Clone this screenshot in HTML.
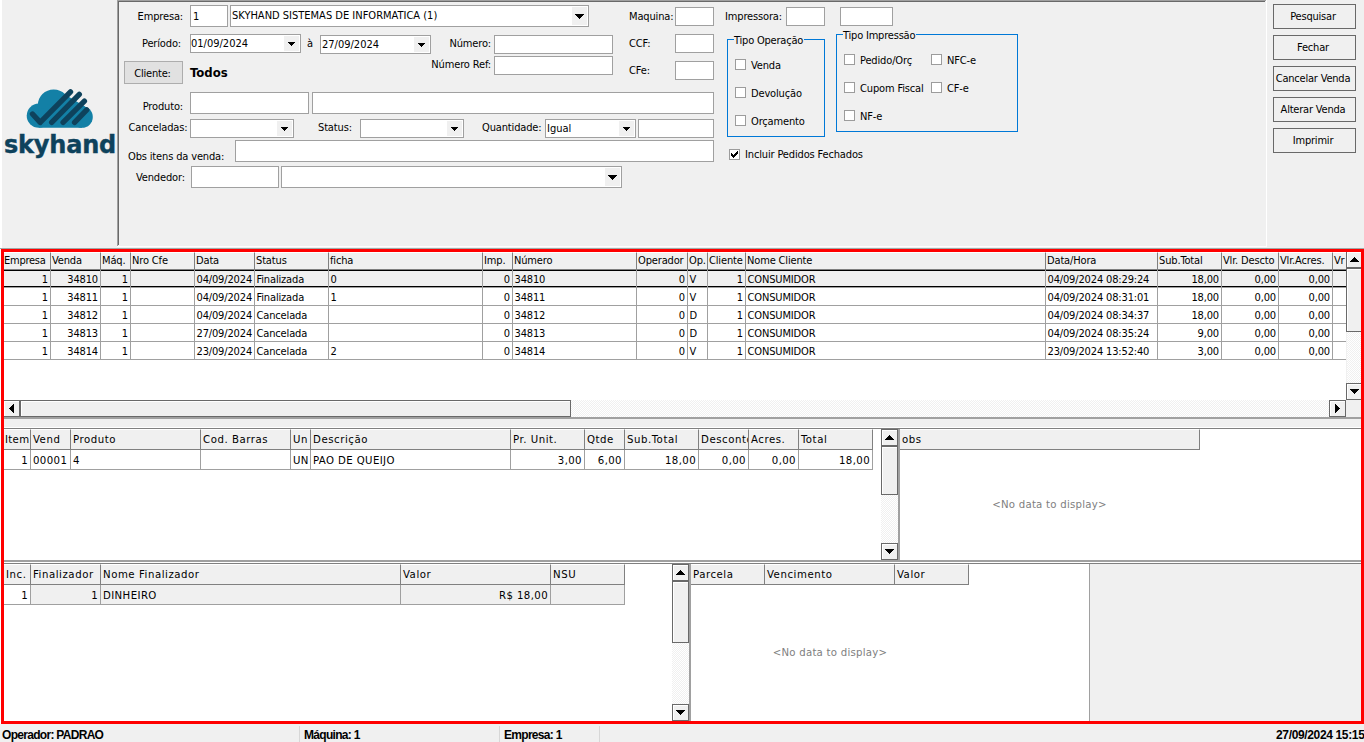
<!DOCTYPE html>
<html lang="pt-BR"><head><meta charset="utf-8"><title>Consulta de Vendas</title>
<style>
html,body{margin:0;padding:0}
body{width:1364px;height:742px;overflow:hidden;background:#f0f0f0;position:relative;
 font-family:"DejaVu Sans Condensed","Liberation Sans",sans-serif;font-size:11px;color:#000;line-height:13px;}
div,span,svg{position:absolute;box-sizing:border-box;white-space:nowrap}
.in{background:#fff;border:1px solid #a0a0a0}
.in span{left:2px}
.lb{height:13px;line-height:13px;letter-spacing:-.15px}
.r{text-align:right}
.btn{border:1px solid #696969;background:#f0f0f0;text-align:center;line-height:24px;letter-spacing:-.2px;padding-right:3px}
.dd{background:#f0f0f0}
.cb{width:11px;height:11px;background:#fff;border:1px solid #9c9c9c}
.grp{border:1px solid #0078d7}
.grp b{position:absolute;font-weight:normal;background:#f0f0f0;top:-6px;height:13px;line-height:13px;letter-spacing:-.2px}
.g{background:#fff;overflow:hidden}
.hd{background:#f0f0f0;border-right:1px solid #808080;border-bottom:1px solid #808080;border-top:1px solid #fff;padding-left:1px;overflow:hidden}
.c{border-right:1px solid #a0a0a0;border-bottom:1px solid #a0a0a0;padding:0 2px 0 2px;overflow:hidden}
.g1 .hd{height:18px;line-height:16px;letter-spacing:-.15px}
.g1 .c{height:18px;line-height:17px;padding:1px 2px 0 1.5px;letter-spacing:-.15px}
.s12{font-size:11.3px}
.s12 .hd{height:21px;line-height:20px;padding-left:2px;letter-spacing:.55px}
.s12 .c{height:20px;line-height:19px;padding-top:1px;letter-spacing:.4px}
.sb{background:#f0f0f0}
.trk{background-color:#fff;background-image:
 linear-gradient(45deg,#f0f0f0 25%,transparent 25%,transparent 75%,#f0f0f0 75%),
 linear-gradient(45deg,#f0f0f0 25%,transparent 25%,transparent 75%,#f0f0f0 75%);
 background-size:2px 2px;background-position:0 0,1px 1px}
.sbb{background:#f0f0f0;border:1px solid #696969;box-shadow:inset 1px 1px 0 #fff}
.nd{color:#808080;font-size:11.3px;letter-spacing:.25px}
.st{font-family:"Liberation Sans",sans-serif;font-weight:bold;font-size:12px;letter-spacing:-.7px;top:728px;height:14px;line-height:14px}
</style></head>
<body>
<div class="" style="left:0px;top:0px;width:2px;height:249px;background:#fff"></div>
<div class="" style="left:0px;top:249px;width:1px;height:475px;background:#fff"></div>
<div class="" style="left:117px;top:0px;width:1149px;height:1px;background:#a0a0a0"></div>
<div class="" style="left:118px;top:1px;width:1147px;height:1px;background:#696969"></div>
<div class="" style="left:117px;top:0px;width:1px;height:246px;background:#a0a0a0"></div>
<div class="" style="left:118px;top:1px;width:1px;height:244px;background:#696969"></div>
<div class="" style="left:117px;top:246px;width:1150px;height:1px;background:#fff"></div>
<div class="" style="left:1266px;top:0px;width:1px;height:247px;background:#fff"></div>
<div class="" style="left:0px;top:248px;width:1364px;height:1px;background:#a0a8a8"></div>
<svg style="left:22px;top:86px" width="76" height="46" viewBox="0 0 76 46">
<g fill="#1380a6"><circle cx="16.8" cy="29.7" r="12.1"/><circle cx="31.7" cy="19.3" r="15.9"/><circle cx="60" cy="31" r="10.8"/>
<path d="M16.8 41.8 L16.8 25 L42 8 L63 20.5 L60 41.8 Z"/></g>
<g stroke="#0e425c" stroke-width="5.4" stroke-linecap="round" stroke-linejoin="round" fill="none">
<path d="M10.5 28 L18.2 36.4 L48.5 5.8"/>
<path d="M29.7 36.4 L57.3 8.4"/>
<path d="M41.1 36.4 L62.4 15.2"/>
<path d="M52.6 36.4 L64.7 23.9"/>
</g></svg>
<span style="left:4px;top:128.5px;width:112px;height:32px;line-height:32px;text-align:center;font-family:'DejaVu Sans','Liberation Sans',sans-serif;font-weight:bold;font-size:24px;color:#0e425c;letter-spacing:-.2px;-webkit-text-stroke:.4px #0e425c" id="logo">skyhand</span>
<span class="lb r" style="right:1181px;top:10px;">Empresa:</span>
<div class="in" style="left:190px;top:5px;width:38px;height:22px;"><span style="top:4px">1</span></div>
<div class="in" style="left:230px;top:5px;width:359px;height:22px;"><span style="top:3px;left:1px">SKYHAND SISTEMAS DE INFORMATICA (1)</span><div class="dd" style="left:341px;top:1px;width:15px;height:18px"><svg width="9" height="5" viewBox="0 0 9 5" shape-rendering="crispEdges" style="left:3px;top:7px"><path d="M0 0h9v1h-1v1h-1v1h-1v1h-1v1h-1v-1h-1v-1h-1v-1h-1v-1h-1z"/></svg></div></div>
<span class="lb r" style="right:1183px;top:37px;">Período:</span>
<div class="in" style="left:190px;top:34px;width:111px;height:19px;"><span style="top:2px;left:0px">01/09/2024</span><div class="dd" style="left:93px;top:1px;width:15px;height:15px"><svg width="7" height="4" viewBox="0 0 7 4" shape-rendering="crispEdges" style="left:4px;top:6px"><path d="M0 0h7v1h-1v1h-1v1h-1v1h-1v-1h-1v-1h-1v-1h-1z"/></svg></div></div>
<span class="lb" style="left:307px;top:37px;">à</span>
<div class="in" style="left:320px;top:35px;width:111px;height:19px;"><span style="top:2px;left:1px">27/09/2024</span><div class="dd" style="left:93px;top:1px;width:15px;height:15px"><svg width="7" height="4" viewBox="0 0 7 4" shape-rendering="crispEdges" style="left:4px;top:6px"><path d="M0 0h7v1h-1v1h-1v1h-1v1h-1v-1h-1v-1h-1v-1h-1z"/></svg></div></div>
<span class="lb r" style="right:873px;top:37px;">Número:</span>
<div class="in" style="left:494px;top:35px;width:119px;height:19px;"></div>
<span class="lb r" style="right:873px;top:58px;">Número Ref:</span>
<div class="in" style="left:494px;top:56px;width:119px;height:19px;"></div>
<div class="btn" style="left:124px;top:61px;width:59px;height:23px;line-height:23px;background:#e1e1e1;border-color:#adadad;padding-right:2px">Cliente:</div>
<span style="left:190px;top:65px;font-weight:bold;font-size:13px;line-height:16px" id="todos">Todos</span>
<span class="lb" style="left:629px;top:10px;">Maquina:</span>
<div class="in" style="left:675px;top:7px;width:39px;height:19px;"></div>
<span class="lb" style="left:629px;top:37px;">CCF:</span>
<div class="in" style="left:675px;top:34px;width:39px;height:19px;"></div>
<span class="lb" style="left:629px;top:64px;">CFe:</span>
<div class="in" style="left:675px;top:61px;width:39px;height:19px;"></div>
<span class="lb" style="left:725px;top:10px;">Impressora:</span>
<div class="in" style="left:786px;top:7px;width:39px;height:19px;"></div>
<div class="in" style="left:840px;top:7px;width:53px;height:19px;"></div>
<span class="lb r" style="right:1181px;top:100px;">Produto:</span>
<div class="in" style="left:190px;top:92px;width:119px;height:22px;"></div>
<div class="in" style="left:312px;top:92px;width:402px;height:22px;"></div>
<span class="lb" style="left:128.6px;top:121px;">Canceladas:</span>
<div class="in" style="left:190px;top:119px;width:104px;height:19px;"><div class="dd" style="left:86px;top:1px;width:15px;height:15px"><svg width="7" height="4" viewBox="0 0 7 4" shape-rendering="crispEdges" style="left:4px;top:6px"><path d="M0 0h7v1h-1v1h-1v1h-1v1h-1v-1h-1v-1h-1v-1h-1z"/></svg></div></div>
<span class="lb" style="left:318px;top:121px;">Status:</span>
<div class="in" style="left:360px;top:119px;width:104px;height:19px;"><div class="dd" style="left:86px;top:1px;width:15px;height:15px"><svg width="7" height="4" viewBox="0 0 7 4" shape-rendering="crispEdges" style="left:4px;top:6px"><path d="M0 0h7v1h-1v1h-1v1h-1v1h-1v-1h-1v-1h-1v-1h-1z"/></svg></div></div>
<span class="lb" style="left:482px;top:121px;">Quantidade:</span>
<div class="in" style="left:545px;top:119px;width:91px;height:19px;"><span style="top:2px;left:1px">Igual</span><div class="dd" style="left:73px;top:1px;width:15px;height:15px"><svg width="7" height="4" viewBox="0 0 7 4" shape-rendering="crispEdges" style="left:4px;top:6px"><path d="M0 0h7v1h-1v1h-1v1h-1v1h-1v-1h-1v-1h-1v-1h-1z"/></svg></div></div>
<div class="in" style="left:638px;top:119px;width:76px;height:19px;"></div>
<span class="lb" style="left:128px;top:150px;">Obs itens da venda:</span>
<div class="in" style="left:235px;top:140px;width:479px;height:22px;"></div>
<span class="lb" style="left:136px;top:171px;">Vendedor:</span>
<div class="in" style="left:191px;top:166px;width:88px;height:22px;"></div>
<div class="in" style="left:281px;top:166px;width:341px;height:22px;"><div class="dd" style="left:323px;top:1px;width:15px;height:18px"><svg width="9" height="5" viewBox="0 0 9 5" shape-rendering="crispEdges" style="left:3px;top:7px"><path d="M0 0h9v1h-1v1h-1v1h-1v1h-1v1h-1v-1h-1v-1h-1v-1h-1v-1h-1z"/></svg></div></div>
<div class="grp" style="left:727px;top:39px;width:98px;height:98px;"><b style="left:6px;padding:0 1px 0 0">Tipo Operação</b></div>
<div class="cb" style="left:735px;top:59px;"></div>
<span class="lb" style="left:751px;top:59px">Venda</span>
<div class="cb" style="left:735px;top:87px;"></div>
<span class="lb" style="left:751px;top:87px">Devolução</span>
<div class="cb" style="left:735px;top:115px;"></div>
<span class="lb" style="left:751px;top:115px">Orçamento</span>
<div class="grp" style="left:836px;top:34px;width:182px;height:98px;"><b style="left:6px;padding:0 1px 0 0">Tipo Impressão</b></div>
<div class="cb" style="left:844px;top:54px;"></div>
<span class="lb" style="left:860px;top:54px">Pedido/Orç</span>
<div class="cb" style="left:844px;top:82px;"></div>
<span class="lb" style="left:860px;top:82px">Cupom Fiscal</span>
<div class="cb" style="left:844px;top:110px;"></div>
<span class="lb" style="left:860px;top:110px">NF-e</span>
<div class="cb" style="left:931px;top:54px;"></div>
<span class="lb" style="left:947px;top:54px">NFC-e</span>
<div class="cb" style="left:931px;top:82px;"></div>
<span class="lb" style="left:947px;top:82px">CF-e</span>
<div class="cb" style="left:729px;top:149px;"><svg width="7" height="7" viewBox="0 0 7 7" style="left:1px;top:1px" shape-rendering="crispEdges"><path d="M0 2h1v1h1v1h1v-1h1v-1h1v-1h1v-1h1v3h-1v1h-1v1h-1v1h-1v1h-1v-1h-1v-1h-1z" fill="#000"/></svg></div>
<span class="lb" style="left:745px;top:148px">Incluir Pedidos Fechados</span>
<div class="btn" style="left:1273px;top:4px;width:83px;height:25px;">Pesquisar</div>
<div class="btn" style="left:1273px;top:35px;width:83px;height:25px;">Fechar</div>
<div class="btn" style="left:1273px;top:66px;width:83px;height:25px;letter-spacing:-.2px">Cancelar Venda</div>
<div class="btn" style="left:1273px;top:97px;width:83px;height:25px;">Alterar Venda</div>
<div class="btn" style="left:1273px;top:128px;width:83px;height:25px;">Imprimir</div>
<div class="g g1" style="left:4px;top:252px;width:1342px;height:148px">
<div class="hd" style="left:0px;top:0;width:47px;padding-left:0;letter-spacing:-.25px;">Empresa</div>
<div class="hd" style="left:47px;top:0;width:50px;">Venda</div>
<div class="hd" style="left:97px;top:0;width:30px;">Máq.</div>
<div class="hd" style="left:127px;top:0;width:64px;">Nro Cfe</div>
<div class="hd" style="left:191px;top:0;width:60px;">Data</div>
<div class="hd" style="left:251px;top:0;width:74px;">Status</div>
<div class="hd" style="left:325px;top:0;width:154px;">ficha</div>
<div class="hd" style="left:479px;top:0;width:30px;">Imp.</div>
<div class="hd" style="left:509px;top:0;width:124px;">Número</div>
<div class="hd" style="left:633px;top:0;width:51px;">Operador</div>
<div class="hd" style="left:684px;top:0;width:20px;">Op.</div>
<div class="hd" style="left:704px;top:0;width:38px;">Cliente</div>
<div class="hd" style="left:742px;top:0;width:300px;">Nome Cliente</div>
<div class="hd" style="left:1042px;top:0;width:112px;">Data/Hora</div>
<div class="hd" style="left:1154px;top:0;width:64px;">Sub.Total</div>
<div class="hd" style="left:1218px;top:0;width:57px;">Vlr. Descto</div>
<div class="hd" style="left:1275px;top:0;width:54px;">Vlr.Acres.</div>
<div class="hd" style="left:1329px;top:0;width:18px;">Vr</div>
<div class="c r" style="left:0px;top:18px;width:47px;background:#f0f0f0;">1</div>
<div class="c r" style="left:47px;top:18px;width:50px;background:#f0f0f0;">34810</div>
<div class="c r" style="left:97px;top:18px;width:30px;background:#f0f0f0;">1</div>
<div class="c " style="left:127px;top:18px;width:64px;background:#f0f0f0;"></div>
<div class="c " style="left:191px;top:18px;width:60px;background:#f0f0f0;">04/09/2024</div>
<div class="c " style="left:251px;top:18px;width:74px;background:#f0f0f0;">Finalizada</div>
<div class="c " style="left:325px;top:18px;width:154px;background:#f0f0f0;">0</div>
<div class="c r" style="left:479px;top:18px;width:30px;background:#f0f0f0;">0</div>
<div class="c " style="left:509px;top:18px;width:124px;background:#f0f0f0;">34810</div>
<div class="c r" style="left:633px;top:18px;width:51px;background:#f0f0f0;">0</div>
<div class="c " style="left:684px;top:18px;width:20px;background:#f0f0f0;">V</div>
<div class="c r" style="left:704px;top:18px;width:38px;background:#f0f0f0;">1</div>
<div class="c " style="left:742px;top:18px;width:300px;background:#f0f0f0;">CONSUMIDOR</div>
<div class="c " style="left:1042px;top:18px;width:112px;background:#f0f0f0;">04/09/2024 08:29:24</div>
<div class="c r" style="left:1154px;top:18px;width:64px;background:#f0f0f0;">18,00</div>
<div class="c r" style="left:1218px;top:18px;width:57px;background:#f0f0f0;">0,00</div>
<div class="c r" style="left:1275px;top:18px;width:54px;background:#f0f0f0;">0,00</div>
<div class="c " style="left:1329px;top:18px;width:18px;background:#f0f0f0;"></div>
<div class="c r" style="left:0px;top:36px;width:47px;">1</div>
<div class="c r" style="left:47px;top:36px;width:50px;">34811</div>
<div class="c r" style="left:97px;top:36px;width:30px;">1</div>
<div class="c " style="left:127px;top:36px;width:64px;"></div>
<div class="c " style="left:191px;top:36px;width:60px;">04/09/2024</div>
<div class="c " style="left:251px;top:36px;width:74px;">Finalizada</div>
<div class="c " style="left:325px;top:36px;width:154px;">1</div>
<div class="c r" style="left:479px;top:36px;width:30px;">0</div>
<div class="c " style="left:509px;top:36px;width:124px;">34811</div>
<div class="c r" style="left:633px;top:36px;width:51px;">0</div>
<div class="c " style="left:684px;top:36px;width:20px;">V</div>
<div class="c r" style="left:704px;top:36px;width:38px;">1</div>
<div class="c " style="left:742px;top:36px;width:300px;">CONSUMIDOR</div>
<div class="c " style="left:1042px;top:36px;width:112px;">04/09/2024 08:31:01</div>
<div class="c r" style="left:1154px;top:36px;width:64px;">18,00</div>
<div class="c r" style="left:1218px;top:36px;width:57px;">0,00</div>
<div class="c r" style="left:1275px;top:36px;width:54px;">0,00</div>
<div class="c " style="left:1329px;top:36px;width:18px;"></div>
<div class="c r" style="left:0px;top:54px;width:47px;">1</div>
<div class="c r" style="left:47px;top:54px;width:50px;">34812</div>
<div class="c r" style="left:97px;top:54px;width:30px;">1</div>
<div class="c " style="left:127px;top:54px;width:64px;"></div>
<div class="c " style="left:191px;top:54px;width:60px;">04/09/2024</div>
<div class="c " style="left:251px;top:54px;width:74px;">Cancelada</div>
<div class="c " style="left:325px;top:54px;width:154px;"></div>
<div class="c r" style="left:479px;top:54px;width:30px;">0</div>
<div class="c " style="left:509px;top:54px;width:124px;">34812</div>
<div class="c r" style="left:633px;top:54px;width:51px;">0</div>
<div class="c " style="left:684px;top:54px;width:20px;">D</div>
<div class="c r" style="left:704px;top:54px;width:38px;">1</div>
<div class="c " style="left:742px;top:54px;width:300px;">CONSUMIDOR</div>
<div class="c " style="left:1042px;top:54px;width:112px;">04/09/2024 08:34:37</div>
<div class="c r" style="left:1154px;top:54px;width:64px;">18,00</div>
<div class="c r" style="left:1218px;top:54px;width:57px;">0,00</div>
<div class="c r" style="left:1275px;top:54px;width:54px;">0,00</div>
<div class="c " style="left:1329px;top:54px;width:18px;"></div>
<div class="c r" style="left:0px;top:72px;width:47px;">1</div>
<div class="c r" style="left:47px;top:72px;width:50px;">34813</div>
<div class="c r" style="left:97px;top:72px;width:30px;">1</div>
<div class="c " style="left:127px;top:72px;width:64px;"></div>
<div class="c " style="left:191px;top:72px;width:60px;">27/09/2024</div>
<div class="c " style="left:251px;top:72px;width:74px;">Cancelada</div>
<div class="c " style="left:325px;top:72px;width:154px;"></div>
<div class="c r" style="left:479px;top:72px;width:30px;">0</div>
<div class="c " style="left:509px;top:72px;width:124px;">34813</div>
<div class="c r" style="left:633px;top:72px;width:51px;">0</div>
<div class="c " style="left:684px;top:72px;width:20px;">D</div>
<div class="c r" style="left:704px;top:72px;width:38px;">1</div>
<div class="c " style="left:742px;top:72px;width:300px;">CONSUMIDOR</div>
<div class="c " style="left:1042px;top:72px;width:112px;">04/09/2024 08:35:24</div>
<div class="c r" style="left:1154px;top:72px;width:64px;">9,00</div>
<div class="c r" style="left:1218px;top:72px;width:57px;">0,00</div>
<div class="c r" style="left:1275px;top:72px;width:54px;">0,00</div>
<div class="c " style="left:1329px;top:72px;width:18px;"></div>
<div class="c r" style="left:0px;top:90px;width:47px;">1</div>
<div class="c r" style="left:47px;top:90px;width:50px;">34814</div>
<div class="c r" style="left:97px;top:90px;width:30px;">1</div>
<div class="c " style="left:127px;top:90px;width:64px;"></div>
<div class="c " style="left:191px;top:90px;width:60px;">23/09/2024</div>
<div class="c " style="left:251px;top:90px;width:74px;">Cancelada</div>
<div class="c " style="left:325px;top:90px;width:154px;">2</div>
<div class="c r" style="left:479px;top:90px;width:30px;">0</div>
<div class="c " style="left:509px;top:90px;width:124px;">34814</div>
<div class="c r" style="left:633px;top:90px;width:51px;">0</div>
<div class="c " style="left:684px;top:90px;width:20px;">V</div>
<div class="c r" style="left:704px;top:90px;width:38px;">1</div>
<div class="c " style="left:742px;top:90px;width:300px;">CONSUMIDOR</div>
<div class="c " style="left:1042px;top:90px;width:112px;">23/09/2024 13:52:40</div>
<div class="c r" style="left:1154px;top:90px;width:64px;">3,00</div>
<div class="c r" style="left:1218px;top:90px;width:57px;">0,00</div>
<div class="c r" style="left:1275px;top:90px;width:54px;">0,00</div>
<div class="c " style="left:1329px;top:90px;width:18px;"></div>
<div style="left:0;top:18px;width:1342px;height:1px;background:#000"></div>
<div style="left:0;top:34px;width:1342px;height:1px;background:#000"></div>
<div style="left:46px;top:18px;width:1px;height:18px;background:#a0a0a0"></div>
<div style="left:96px;top:18px;width:1px;height:18px;background:#a0a0a0"></div>
<div style="left:126px;top:18px;width:1px;height:18px;background:#a0a0a0"></div>
<div style="left:190px;top:18px;width:1px;height:18px;background:#a0a0a0"></div>
<div style="left:250px;top:18px;width:1px;height:18px;background:#a0a0a0"></div>
<div style="left:324px;top:18px;width:1px;height:18px;background:#a0a0a0"></div>
<div style="left:478px;top:18px;width:1px;height:18px;background:#a0a0a0"></div>
<div style="left:508px;top:18px;width:1px;height:18px;background:#a0a0a0"></div>
<div style="left:632px;top:18px;width:1px;height:18px;background:#a0a0a0"></div>
<div style="left:683px;top:18px;width:1px;height:18px;background:#a0a0a0"></div>
<div style="left:703px;top:18px;width:1px;height:18px;background:#a0a0a0"></div>
<div style="left:741px;top:18px;width:1px;height:18px;background:#a0a0a0"></div>
<div style="left:1041px;top:18px;width:1px;height:18px;background:#a0a0a0"></div>
<div style="left:1153px;top:18px;width:1px;height:18px;background:#a0a0a0"></div>
<div style="left:1217px;top:18px;width:1px;height:18px;background:#a0a0a0"></div>
<div style="left:1274px;top:18px;width:1px;height:18px;background:#a0a0a0"></div>
<div style="left:1328px;top:18px;width:1px;height:18px;background:#a0a0a0"></div>
<div style="left:1346px;top:18px;width:1px;height:18px;background:#a0a0a0"></div>
</div>
<div class="trk" style="left:1347px;top:252px;width:14px;height:148px;"></div>
<div class="sbb" style="left:1346px;top:251px;width:17px;height:17px;"><svg width="9" height="5" viewBox="0 0 9 5" shape-rendering="crispEdges" style="left:3px;top:5px"><path d="M4 0h1v1h1v1h1v1h1v1h1v1h-9v-1h1v-1h1v-1h1v-1h1z"/></svg></div>
<div class="sbb" style="left:1346px;top:268px;width:17px;height:64px;"></div>
<div class="sbb" style="left:1346px;top:383px;width:17px;height:17px;"><svg width="9" height="5" viewBox="0 0 9 5" shape-rendering="crispEdges" style="left:3px;top:5px"><path d="M0 0h9v1h-1v1h-1v1h-1v1h-1v1h-1v-1h-1v-1h-1v-1h-1v-1h-1z"/></svg></div>
<div class="trk" style="left:4px;top:400px;width:1342px;height:17px;"></div>
<div class="sbb" style="left:3px;top:400px;width:17px;height:17px;"><svg width="5" height="9" viewBox="0 0 5 9" shape-rendering="crispEdges" style="left:5px;top:3px"><path d="M0 4h1v-1h1v-1h1v-1h1v-1h1v9h-1v-1h-1v-1h-1v-1h-1v-1h-1z"/></svg></div>
<div class="sbb" style="left:20px;top:400px;width:551px;height:17px;"></div>
<div class="sbb" style="left:1329px;top:400px;width:17px;height:17px;"><svg width="5" height="9" viewBox="0 0 5 9" shape-rendering="crispEdges" style="left:5px;top:3px"><path d="M0 0h1v1h1v1h1v1h1v1h1v1h-1v1h-1v1h-1v1h-1v1h-1z"/></svg></div>
<div class="sb" style="left:1346px;top:400px;width:15px;height:17px;"></div>
<div class="" style="left:4px;top:417px;width:1357px;height:2px;background:#a0a0a0"></div>
<div class="" style="left:4px;top:427px;width:1357px;height:1px;background:#fff"></div>
<div class="" style="left:4px;top:428px;width:1357px;height:1px;background:#808080"></div>
<div class="g s12" style="left:4px;top:429px;width:877px;height:131px">
<div class="hd" style="left:0px;top:0;width:27px;padding-left:1px;letter-spacing:.3px;">Item</div>
<div class="hd" style="left:27px;top:0;width:40px;">Vend</div>
<div class="hd" style="left:67px;top:0;width:130px;">Produto</div>
<div class="hd" style="left:197px;top:0;width:90px;">Cod. Barras</div>
<div class="hd" style="left:287px;top:0;width:20px;">Un</div>
<div class="hd" style="left:307px;top:0;width:200px;">Descrição</div>
<div class="hd" style="left:507px;top:0;width:74px;">Pr. Unit.</div>
<div class="hd" style="left:581px;top:0;width:40px;">Qtde</div>
<div class="hd" style="left:621px;top:0;width:74px;">Sub.Total</div>
<div class="hd" style="left:695px;top:0;width:50px;">Desconto</div>
<div class="hd" style="left:745px;top:0;width:50px;">Acres.</div>
<div class="hd" style="left:795px;top:0;width:74px;">Total</div>
<div class="c r" style="left:0px;top:21px;width:27px">1</div>
<div class="c " style="left:27px;top:21px;width:40px">00001</div>
<div class="c " style="left:67px;top:21px;width:130px">4</div>
<div class="c " style="left:197px;top:21px;width:90px"></div>
<div class="c " style="left:287px;top:21px;width:20px">UN</div>
<div class="c " style="left:307px;top:21px;width:200px">PAO DE QUEIJO</div>
<div class="c r" style="left:507px;top:21px;width:74px">3,00</div>
<div class="c r" style="left:581px;top:21px;width:40px">6,00</div>
<div class="c r" style="left:621px;top:21px;width:74px">18,00</div>
<div class="c r" style="left:695px;top:21px;width:50px">0,00</div>
<div class="c r" style="left:745px;top:21px;width:50px">0,00</div>
<div class="c r" style="left:795px;top:21px;width:74px">18,00</div>
</div>
<div class="trk" style="left:881px;top:429px;width:17px;height:131px;"></div>
<div class="sbb" style="left:881px;top:429px;width:17px;height:17px;"><svg width="9" height="5" viewBox="0 0 9 5" shape-rendering="crispEdges" style="left:3px;top:5px"><path d="M4 0h1v1h1v1h1v1h1v1h1v1h-9v-1h1v-1h1v-1h1v-1h1z"/></svg></div>
<div class="sbb" style="left:881px;top:446px;width:17px;height:49px;"></div>
<div class="sbb" style="left:881px;top:543px;width:17px;height:17px;"><svg width="9" height="5" viewBox="0 0 9 5" shape-rendering="crispEdges" style="left:3px;top:5px"><path d="M0 0h9v1h-1v1h-1v1h-1v1h-1v1h-1v-1h-1v-1h-1v-1h-1v-1h-1z"/></svg></div>
<div class="" style="left:898px;top:429px;width:2px;height:131px;background:#a0a0a0"></div>
<div class="g s12" style="left:900px;top:429px;width:461px;height:131px">
<div class="hd" style="left:0;top:0;width:300px">obs</div>
<span class="nd" style="left:0;top:69px;width:299px;text-align:center">&lt;No data to display&gt;</span>
</div>
<div class="" style="left:4px;top:560px;width:1357px;height:2px;background:#a0a0a0"></div>
<div class="" style="left:4px;top:562px;width:1357px;height:1px;background:#fff"></div>
<div class="" style="left:4px;top:563px;width:1357px;height:1px;background:#808080"></div>
<div class="g s12" style="left:4px;top:564px;width:668px;height:157px">
<div class="hd" style="left:0px;top:0;width:27px">Inc.</div>
<div class="hd" style="left:27px;top:0;width:70px">Finalizador</div>
<div class="hd" style="left:97px;top:0;width:300px">Nome Finalizador</div>
<div class="hd" style="left:397px;top:0;width:150px">Valor</div>
<div class="hd" style="left:547px;top:0;width:74px">NSU</div>
<div class="c r" style="left:0px;top:21px;width:27px;">1</div>
<div class="c r" style="left:27px;top:21px;width:70px;background:#f0f0f0;">1</div>
<div class="c " style="left:97px;top:21px;width:300px;background:#f0f0f0;">DINHEIRO</div>
<div class="c r" style="left:397px;top:21px;width:150px;background:#f0f0f0;">R$ 18,00</div>
<div class="c " style="left:547px;top:21px;width:74px;background:#f0f0f0;"></div>
</div>
<div class="trk" style="left:672px;top:564px;width:17px;height:157px;"></div>
<div class="sbb" style="left:672px;top:564px;width:17px;height:17px;"><svg width="9" height="5" viewBox="0 0 9 5" shape-rendering="crispEdges" style="left:3px;top:5px"><path d="M4 0h1v1h1v1h1v1h1v1h1v1h-9v-1h1v-1h1v-1h1v-1h1z"/></svg></div>
<div class="sbb" style="left:672px;top:581px;width:17px;height:62px;"></div>
<div class="sbb" style="left:672px;top:704px;width:17px;height:17px;"><svg width="9" height="5" viewBox="0 0 9 5" shape-rendering="crispEdges" style="left:3px;top:5px"><path d="M0 0h9v1h-1v1h-1v1h-1v1h-1v1h-1v-1h-1v-1h-1v-1h-1v-1h-1z"/></svg></div>
<div class="" style="left:689px;top:564px;width:2px;height:157px;background:#a0a0a0"></div>
<div class="g s12" style="left:691px;top:564px;width:398px;height:157px">
<div class="hd" style="left:0px;top:0;width:74px">Parcela</div>
<div class="hd" style="left:74px;top:0;width:130px">Vencimento</div>
<div class="hd" style="left:204px;top:0;width:74px">Valor</div>
<span class="nd" style="left:0;top:82px;width:278px;text-align:center">&lt;No data to display&gt;</span>
</div>
<div class="" style="left:1089px;top:564px;width:1px;height:157px;background:#a0a0a0"></div>
<div style="left:1px;top:249px;width:1363px;height:475px;border:3px solid #f00"></div>
<span class="st" style="left:2px">Operador: PADRAO</span>
<span class="st" style="left:304px">Máquina: 1</span>
<span class="st" style="left:504px">Empresa: 1</span>
<span class="st" style="left:1276px;letter-spacing:-.35px">27/09/2024 15:15</span>
<div class="" style="left:299px;top:726px;width:1px;height:16px;background:#d7d7d7"></div>
<div class="" style="left:499px;top:726px;width:1px;height:16px;background:#d7d7d7"></div>
<div class="" style="left:599px;top:726px;width:1px;height:16px;background:#d7d7d7"></div>
</body></html>
